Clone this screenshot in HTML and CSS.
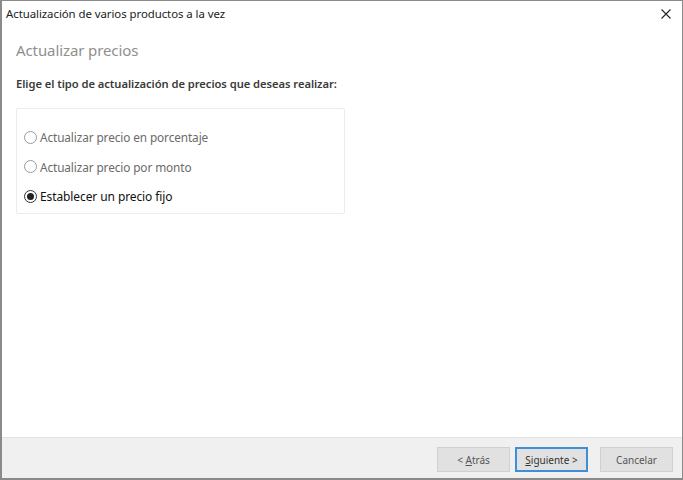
FILE: index.html
```html
<!DOCTYPE html>
<html lang="es">
<head>
<meta charset="utf-8">
<title>Actualización de varios productos a la vez</title>
<link rel="stylesheet" href="styles.css">
</head>
<body>
<div class="window">
  <div class="titlebar">
    <span class="title">Actualización de varios productos a la vez</span>
    <span class="close">
      <svg width="10" height="10" viewBox="0 0 10 10"><path d="M0.5 0.5L9.5 9.5M9.5 0.5L0.5 9.5" stroke="#222" stroke-width="1.1"/></svg>
    </span>
  </div>
  <div class="content">
    <h1 class="heading">Actualizar precios</h1>
    <p class="intro">Elige el tipo de actualización de precios que deseas realizar:</p>
    <div class="group">
      <label class="radio"><span class="dot"></span><span class="label muted">Actualizar precio en porcentaje</span></label>
      <label class="radio"><span class="dot"></span><span class="label muted">Actualizar precio por monto</span></label>
      <label class="radio"><span class="dot checked"></span><span class="label">Establecer un precio fijo</span></label>
    </div>
  </div>
  <div class="footer">
    <button class="btn">&lt; <u>A</u>trás</button>
    <button class="btn primary"><u>S</u>iguiente &gt;</button>
    <button class="btn cancel">Cancelar</button>
  </div>
</div>
</body>
</html>
```
FILE: styles.css
```css
html, body {
  margin: 0;
  padding: 0;
  width: 683px;
  height: 480px;
  overflow: hidden;
  background: #ffffff;
}
.window {
  box-sizing: border-box;
  width: 683px;
  height: 480px;
  border: 1px solid #8a8a8a;
  border-left-width: 2px;
  border-bottom-width: 2px;
  display: flex;
  flex-direction: column;
  font-family: "Noto Sans", "Open Sans", sans-serif;
  color: #1a1a1a;
  background: #fff;
}
.titlebar {
  box-sizing: border-box;
  height: 28px;
  display: flex;
  align-items: center;
  justify-content: space-between;
  padding: 0 11px 3px 4px;
  flex: none;
}
.title {
  font-size: 11.4px;
  color: #222;
  letter-spacing: -0.05px;
}
.close {
  display: flex;
  align-items: center;
}
.content {
  flex: 1;
  padding: 11px 0 0 14px;
}
.heading {
  margin: 0;
  font-size: 15px;
  font-weight: 400;
  color: #8f8f8f;
  line-height: 20px;
  letter-spacing: -0.1px;
}
.intro {
  margin: 17px 0 0 0;
  font-size: 11.2px;
  font-weight: 600;
  color: #3a3a3a;
  line-height: 14px;
  letter-spacing: -0.05px;
}
.group {
  box-sizing: border-box;
  width: 329px;
  height: 106px;
  margin-top: 17px;
  border: 1px solid #ececec;
  border-radius: 2px;
  padding: 20px 0 0 7px;
  display: flex;
  flex-direction: column;
  gap: 13.5px;
}
.radio {
  display: flex;
  align-items: center;
  height: 16px;
  gap: 3px;
}
.dot {
  box-sizing: border-box;
  width: 13px;
  height: 13px;
  border-radius: 50%;
  border: 1px solid #9a9a9a;
  background: #fff;
  display: flex;
  align-items: center;
  justify-content: center;
}
.dot.checked {
  border-color: #333;
}
.dot.checked::after {
  content: "";
  width: 7px;
  height: 7px;
  border-radius: 50%;
  background: #222;
}
.label {
  font-size: 12px;
  color: #111;
  letter-spacing: -0.1px;
}
.label.muted {
  font-size: 11.8px;
  color: #6a6a6a;
}
.footer {
  height: 41px;
  background: #f0f0f0;
  border-top: 1px solid #e3e3e3;
  display: flex;
  align-items: flex-start;
  justify-content: flex-end;
  padding: 9px 9px 0 0;
  box-sizing: border-box;
  flex: none;
}
.btn {
  box-sizing: border-box;
  width: 73px;
  height: 25px;
  margin-left: 5px;
  background: #e1e1e1;
  border: 1px solid #d0d0d0;
  font-family: "Noto Sans", "Open Sans", sans-serif;
  font-size: 10px;
  color: #555;
  padding: 0;
}
.btn.primary {
  border: 2px solid #3f8fd8;
  color: #333;
}
.btn.cancel {
  margin-left: 12px;
}
```
